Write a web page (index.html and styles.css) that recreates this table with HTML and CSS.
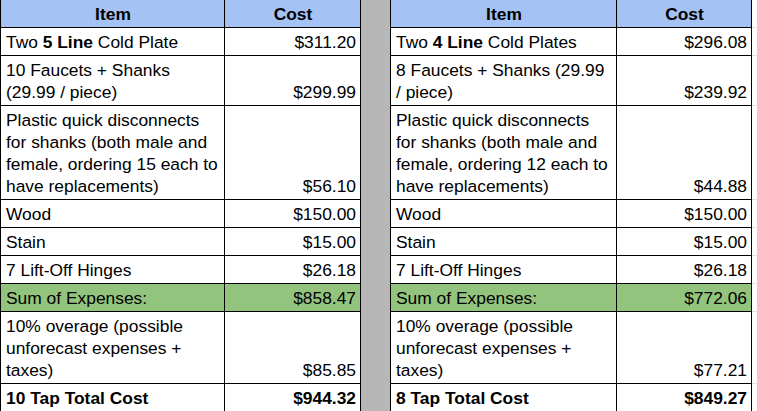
FILE: index.html
```html
<!DOCTYPE html>
<html>
<head>
<meta charset="utf-8">
<link rel="stylesheet" href="styles.css">
</head>
<body>
<table class="sheet">
  <colgroup>
    <col class="c-item-l">
    <col class="c-cost-l">
    <col class="c-gap">
    <col class="c-item-r">
    <col class="c-cost-r">
    <col class="c-rest">
  </colgroup>
  <tr class="head">
    <th>Item</th><th>Cost</th>
    <td class="gap" rowspan="10"></td>
    <th>Item</th><th>Cost</th>
    <td class="rest"></td>
  </tr>
  <tr>
    <td>Two <b>5 Line</b> Cold Plate</td><td class="num">$311.20</td>
    <td>Two <b>4 Line</b> Cold Plates</td><td class="num">$296.08</td>
    <td class="rest"></td>
  </tr>
  <tr>
    <td>10 Faucets + Shanks (29.99 / piece)</td><td class="num">$299.99</td>
    <td>8 Faucets + Shanks (29.99 / piece)</td><td class="num">$239.92</td>
    <td class="rest"></td>
  </tr>
  <tr>
    <td>Plastic quick disconnects for shanks (both male and female, ordering 15 each to have replacements)</td><td class="num">$56.10</td>
    <td>Plastic quick disconnects for shanks (both male and female, ordering 12 each to have replacements)</td><td class="num">$44.88</td>
    <td class="rest"></td>
  </tr>
  <tr>
    <td>Wood</td><td class="num">$150.00</td>
    <td>Wood</td><td class="num">$150.00</td>
    <td class="rest"></td>
  </tr>
  <tr>
    <td>Stain</td><td class="num">$15.00</td>
    <td>Stain</td><td class="num">$15.00</td>
    <td class="rest"></td>
  </tr>
  <tr>
    <td>7 Lift-Off Hinges</td><td class="num">$26.18</td>
    <td>7 Lift-Off Hinges</td><td class="num">$26.18</td>
    <td class="rest"></td>
  </tr>
  <tr class="sum">
    <td>Sum of Expenses:</td><td class="num">$858.47</td>
    <td>Sum of Expenses:</td><td class="num">$772.06</td>
    <td class="rest"></td>
  </tr>
  <tr>
    <td>10% overage (possible unforecast expenses + taxes)</td><td class="num">$85.85</td>
    <td>10% overage (possible unforecast expenses + taxes)</td><td class="num">$77.21</td>
    <td class="rest"></td>
  </tr>
  <tr class="total">
    <td>10 Tap Total Cost</td><td class="num">$944.32</td>
    <td>8 Tap Total Cost</td><td class="num">$849.27</td>
    <td class="rest"></td>
  </tr>
</table>
</body>
</html>
```

FILE: styles.css
```css
html, body {
  margin: 0;
  padding: 0;
  background: #ffffff;
}

.sheet {
  border-collapse: collapse;
  table-layout: fixed;
  width: 772px;
  font-family: "Liberation Sans", Arial, sans-serif;
  font-size: 17.4px;
  line-height: 22px;
  color: #000000;
}

.c-item-l { width: 224px; }
.c-cost-l { width: 136px; }
.c-gap { width: 30px; }
.c-item-r { width: 226px; }
.c-cost-r { width: 135px; }
.c-rest { width: 21px; }

.sheet th,
.sheet td {
  border: 1px solid #000000;
  padding: 3px 4px 2px 5px;
  vertical-align: bottom;
  text-align: left;
  overflow: hidden;
}

.sheet tr:first-child th,
.sheet tr:first-child td {
  border-top: none;
}

.sheet th {
  background: #a4c2f4;
  font-weight: bold;
  text-align: center;
}

.sheet .num {
  text-align: right;
}

.sheet .gap {
  background: #b7b7b7;
  padding: 0;
}

.sheet .rest {
  border-top: 1px solid #e2e2e3;
  border-bottom: 1px solid #e2e2e3;
  border-right: 1px solid #e2e2e3;
  background: #ffffff;
}

.sum td {
  background: #93c47d;
}

.sum td.rest {
  background: #ffffff;
}

.total td {
  font-weight: bold;
}
```
